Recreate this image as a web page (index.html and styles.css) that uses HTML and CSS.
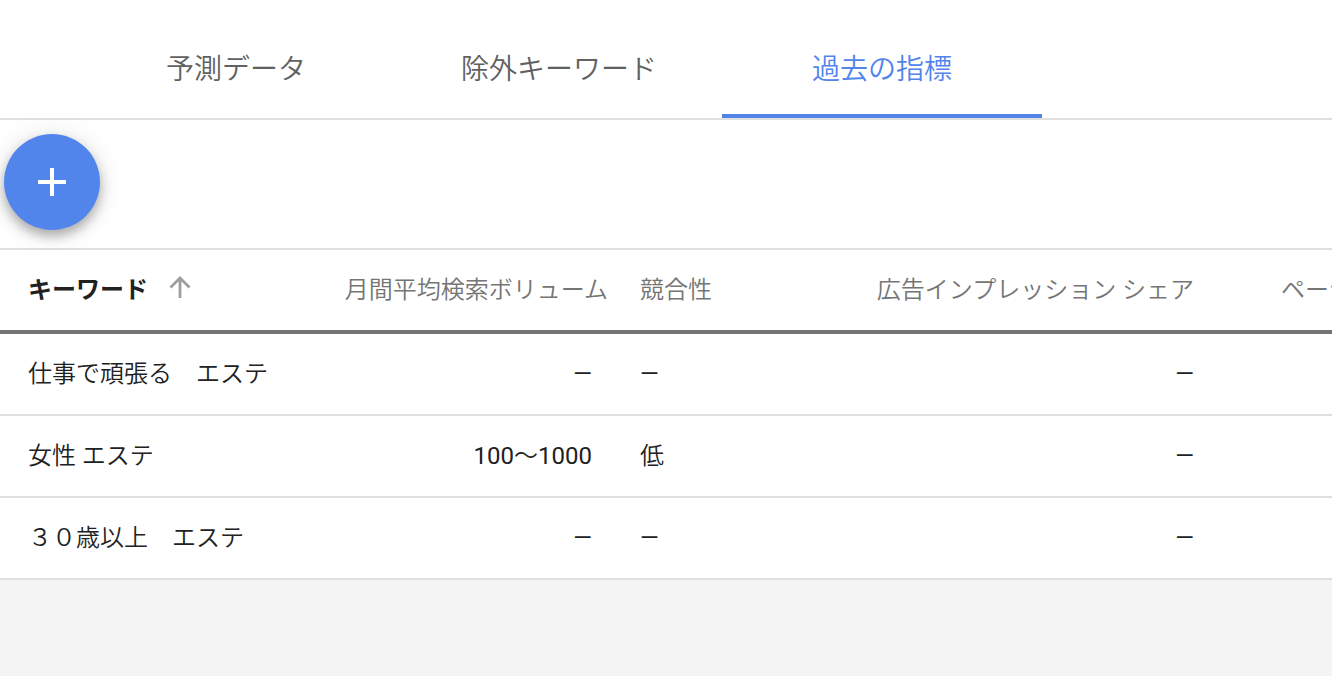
FILE: index.html
```html
<!DOCTYPE html>
<html lang="ja">
<head>
<meta charset="utf-8">
<title>過去の指標</title>
<link rel="stylesheet" href="styles.css">
</head>
<body>
<nav class="tabs">
  <button class="tab tab-forecast" type="button">予測データ</button>
  <button class="tab tab-negative" type="button">除外キーワード</button>
  <button class="tab tab-history active" type="button" aria-current="page">過去の指標</button>
</nav>
<div class="toolbar">
  <button class="add" type="button" aria-label="追加">
    <svg width="28" height="28" viewBox="0 0 28 28" aria-hidden="true"><path d="M14 0v28M0 14h28" stroke="#fff" stroke-width="4"/></svg>
  </button>
</div>
<main class="table-wrap">
<table class="metrics">
  <colgroup><col class="c-keyword"><col class="c-volume"><col class="c-comp"><col class="c-share"><col class="c-bid"></colgroup>
  <thead>
    <tr>
      <th class="sorted" scope="col">キーワード<svg class="arrow" width="22" height="22" viewBox="0 0 22 22" aria-hidden="true"><path d="M11 22V3M1.500 11.500L11 2l9.500 9.500" fill="none" stroke="#9e9e9e" stroke-width="2.800"/></svg></th>
      <th class="num head-volume" scope="col">月間平均検索ボリューム</th>
      <th scope="col">競合性</th>
      <th class="num" scope="col">広告インプレッション シェア</th>
      <th class="bid" scope="col">ページ</th>
    </tr>
  </thead>
  <tbody>
    <tr><td>仕事で頑張る　エステ</td><td class="num value">—</td><td class="value">—</td><td class="num value">—</td><td></td></tr>
    <tr><td>女性 エステ</td><td class="num value">100<span class="range">～</span>1000</td><td>低</td><td class="num value">—</td><td></td></tr>
    <tr><td>３０歳以上　エステ</td><td class="num value">—</td><td class="value">—</td><td class="num value">—</td><td></td></tr>
  </tbody>
</table>
</main>
</body>
</html>
```
FILE: styles.css
```css
* { box-sizing: border-box; }
body {
  margin: 0;
  min-height: 100vh;
  overflow-x: hidden;
  background: #f4f4f4;
  color: #212121;
  font-family: Roboto, "Noto Sans CJK JP", sans-serif;
  font-weight: 350;
}
button { border: 0; padding: 0; font: inherit; cursor: pointer; }
.tabs {
  display: flex;
  padding: 18px 0 0 76px;
  background: #fff;
  border-bottom: 2px solid #e0e0e0;
}
.tab {
  height: 100px;
  flex: none;
  width: 320px;
  padding-top: 2px;
  background: none;
  border-bottom: 4px solid transparent;
  color: #616161;
  font-size: 28px;
}
.tab-negative { width: 326px; }
.active { color: #5284ec; border-bottom-color: #5284e8; }
.toolbar {
  height: 130px;
  padding: 14px 4px;
  background: #fff;
  border-bottom: 2px solid #e0e0e0;
}
.add {
  display: grid;
  place-items: center;
  width: 96px;
  height: 96px;
  border-radius: 50%;
  background: #5285ec;
  box-shadow: 0 6px 12px rgba(0, 0, 0, .3), 0 2px 30px rgba(0, 0, 0, .1);
}
.table-wrap { overflow: hidden; }
.metrics {
  width: 100%;
  min-width: 1332px;
  table-layout: fixed;
  border-collapse: separate;
  border-spacing: 0;
  background: #fff;
  font-size: 24px;
  line-height: 36px;
  white-space: nowrap;
}
.c-keyword { width: 320px; }
.c-volume { width: 296px; }
.c-comp { width: 200px; }
.c-share { width: 402px; }
th, td {
  height: 82px;
  padding: 0 24px;
  text-align: left;
  font-weight: 350;
  border-bottom: 2px solid #e0e0e0;
}
th {
  height: 84px;
  color: #757575;
  border-bottom: 4px solid #757575;
}
th:first-child, td:first-child { padding-left: 28px; }
.num { text-align: right; }
.value { font-weight: 400; }
.range { font-weight: 350; }
.head-volume { padding-right: 8px; }
.sorted { color: #212121; font-weight: 700; }
.arrow { margin-left: 21px; }
.bid { padding: 0 0 0 63px; }
```
